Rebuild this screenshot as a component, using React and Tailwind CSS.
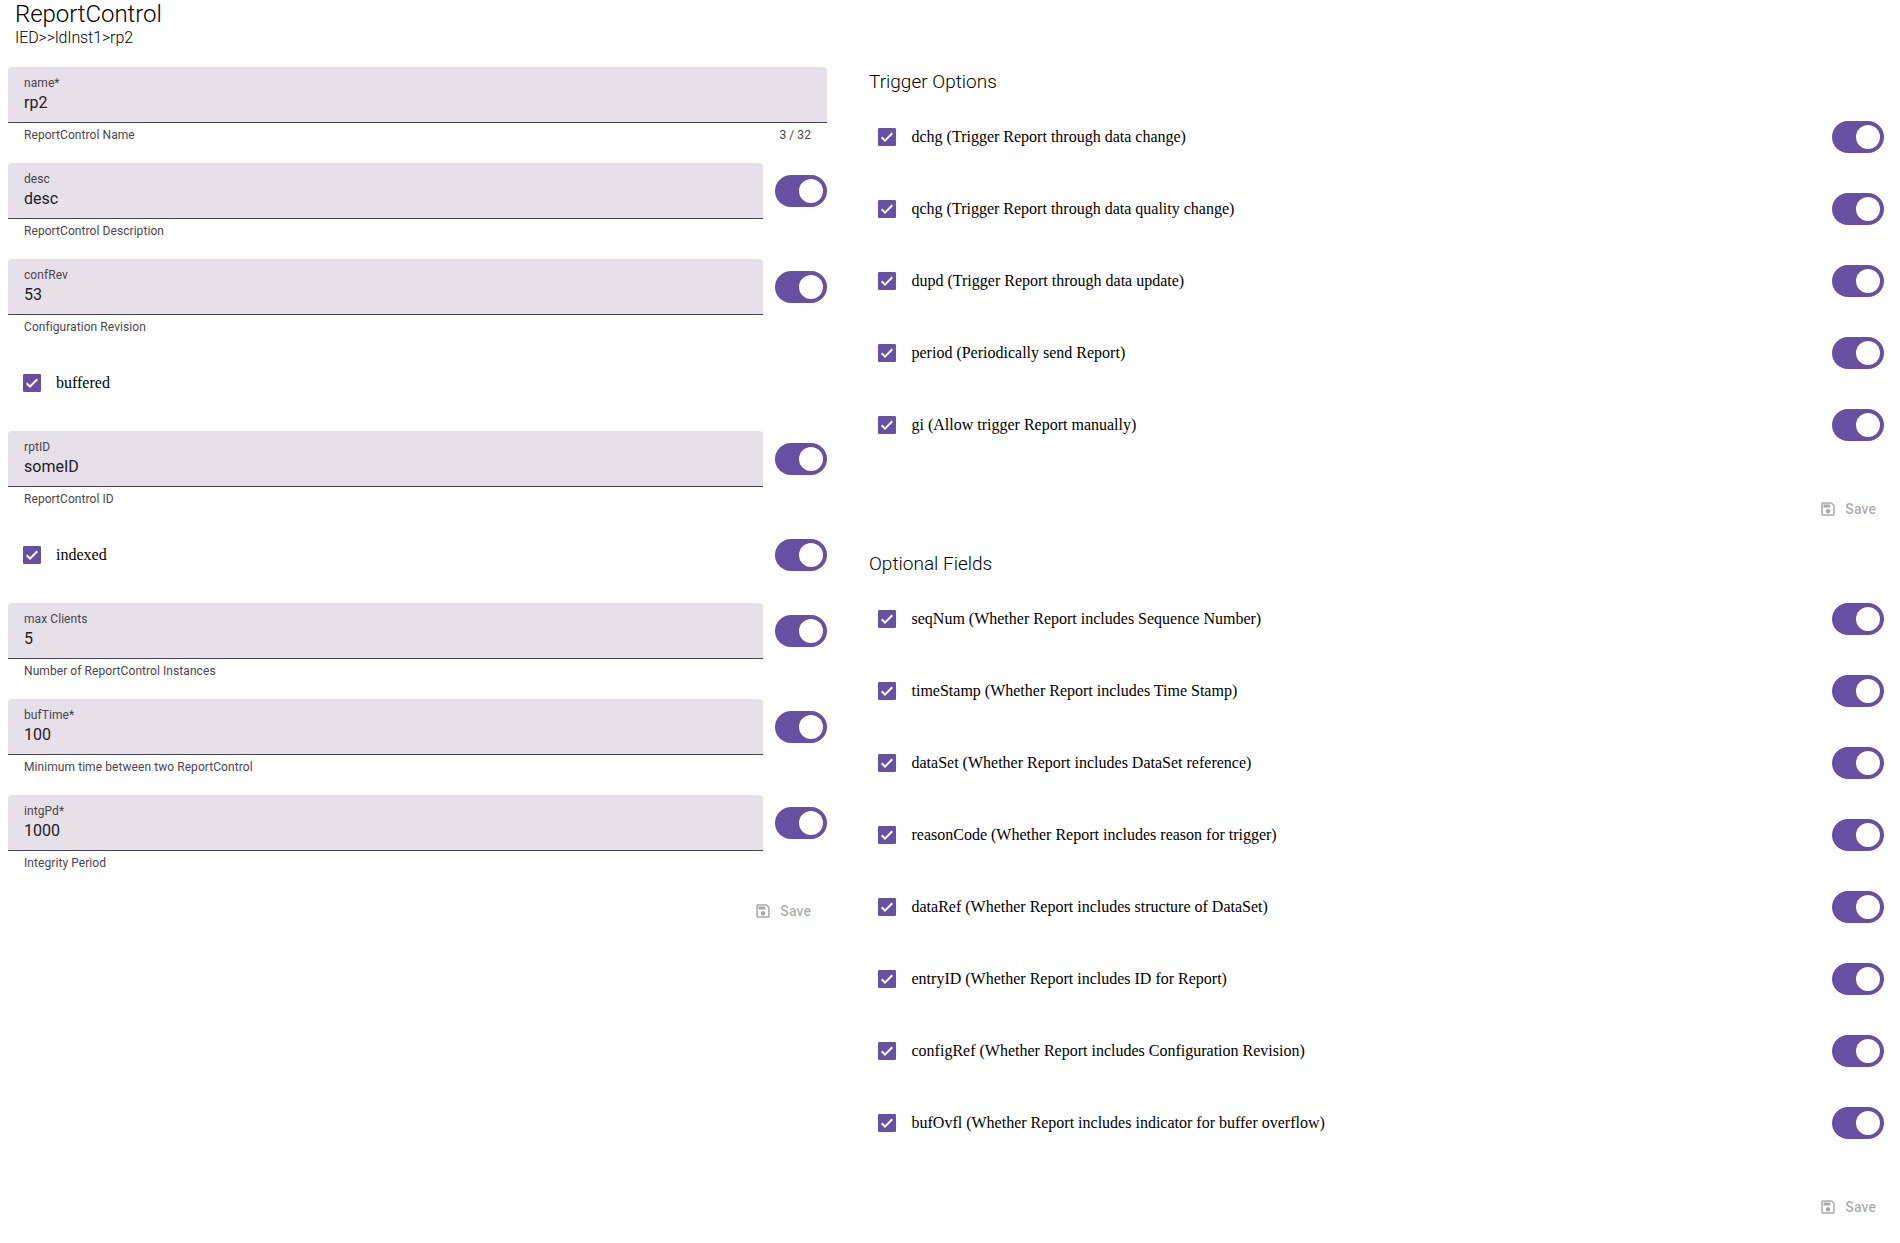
const generalFields = [
  { label: 'name*', value: 'rp2', help: 'ReportControl Name', counter: '3 / 32' },
  { label: 'desc', value: 'desc', help: 'ReportControl Description', toggle: true },
  { label: 'confRev', value: '53', help: 'Configuration Revision', toggle: true },
  { check: 'buffered' },
  { label: 'rptID', value: 'someID', help: 'ReportControl ID', toggle: true },
  { check: 'indexed', toggle: true },
  { label: 'max Clients', value: '5', help: 'Number of ReportControl Instances', toggle: true },
  { label: 'bufTime*', value: '100', help: 'Minimum time between two ReportControl', toggle: true },
  { label: 'intgPd*', value: '1000', help: 'Integrity Period', toggle: true },
];

const triggerOptions = [
  'dchg (Trigger Report through data change)',
  'qchg (Trigger Report through data quality change)',
  'dupd (Trigger Report through data update)',
  'period (Periodically send Report)',
  'gi (Allow trigger Report manually)',
];

const optionalFields = [
  'seqNum (Whether Report includes Sequence Number)',
  'timeStamp (Whether Report includes Time Stamp)',
  'dataSet (Whether Report includes DataSet reference)',
  'reasonCode (Whether Report includes reason for trigger)',
  'dataRef (Whether Report includes structure of DataSet)',
  'entryID (Whether Report includes ID for Report)',
  'configRef (Whether Report includes Configuration Revision)',
  'bufOvfl (Whether Report includes indicator for buffer overflow)',
];

function Toggle() {
  return (
    <button className="flex h-8 w-13 shrink-0 items-center justify-end rounded-full bg-[#6750a4] pr-1">
      <span className="size-6 rounded-full bg-white" />
    </button>
  );
}

function CheckItem({ label, gap = 'gap-[15px]' }) {
  return (
    <label className={`flex h-14 flex-1 items-center pl-[15px] ${gap}`}>
      <svg viewBox="0 0 18 18" className="size-[18px] shrink-0">
        <rect width="18" height="18" rx="1.2" fill="#6750a4" />
        <path
          d="M7 14 15 6 13.586 4.586 7 11.172 4.414 8.586 3 10Z"
          fill="#fff"
        />
      </svg>
      <span className="font-['Liberation_Serif',serif] text-base leading-[18px]">{label}</span>
    </label>
  );
}

function TextField({ label, value, help, counter }) {
  return (
    <div className="flex-1">
      <div className="flex h-14 flex-col rounded-t border-b border-[#49454f] bg-[#e6e0e9] px-4 pt-2">
        <span className="text-xs leading-4 tracking-[0.07px] text-[#49454f]">{label}</span>
        <span className="text-base leading-6 text-[#1d1b20]">{value}</span>
      </div>
      <div className="flex justify-between px-4 pt-1 text-xs leading-4 tracking-[0.07px] text-[#49454f]">
        <span>{help}</span>
        {counter && <span>{counter}</span>}
      </div>
    </div>
  );
}

function SaveButton() {
  return (
    <div className="flex justify-end">
      <button className="flex h-10 items-center gap-2 pr-4 text-sm font-medium leading-5 tracking-[0.1px] text-[#1d1b20]/38">
        <svg viewBox="0 0 24 24" className="size-[18px]" fill="currentColor">
          <path d="M17 3H5c-1.11 0-2 .9-2 2v14c0 1.1.89 2 2 2h14c1.1 0 2-.9 2-2V7l-4-4zm2 16H5V5h11.17L19 7.83V19zm-7-7c-1.66 0-3 1.34-3 3s1.34 3 3 3 3-1.34 3-3-1.34-3-3-3zM6 6h9v4H6V6z" />
        </svg>
        Save
      </button>
    </div>
  );
}

function OptionGroup({ title, items }) {
  return (
    <section>
      <h3 className="pl-[6px] pt-px text-[19px] font-light leading-7">{title}</h3>
      <div className="mt-[13px] flex flex-col gap-4 pr-2">
        {items.map((item) => (
          <div key={item} className="flex items-center">
            <CheckItem label={item} gap="gap-[15.5px]" />
            <Toggle />
          </div>
        ))}
      </div>
      <div className="mt-9">
        <SaveButton />
      </div>
    </section>
  );
}

export default function App() {
  return (
    <div className="h-[1243px] w-[1900px] overflow-hidden bg-white font-[Roboto,sans-serif] text-black">
      <header className="h-[67px] pl-[15px]">
        <h2 className="text-2xl font-light leading-7 tracking-[-0.05px]">ReportControl</h2>
        <p className="text-base font-light leading-[19px] tracking-[-0.1px]">IED&gt;&gt;ldInst1&gt;rp2</p>
      </header>
      <main className="flex gap-9 pl-2">
        <section className="w-[819px]">
          <div className="flex flex-col gap-5">
            {generalFields.map((field) => (
              <div key={field.label || field.check} className="flex items-start gap-3">
                {field.check ? <CheckItem label={field.check} /> : <TextField {...field} />}
                {field.toggle && (
                  <div className="flex h-14 items-center">
                    <Toggle />
                  </div>
                )}
              </div>
            ))}
          </div>
          <div className="mt-5">
            <SaveButton />
          </div>
        </section>
        <div className="flex w-[1029px] flex-col gap-5">
          <OptionGroup title="Trigger Options" items={triggerOptions} />
          <OptionGroup title="Optional Fields" items={optionalFields} />
        </div>
      </main>
    </div>
  );
}
